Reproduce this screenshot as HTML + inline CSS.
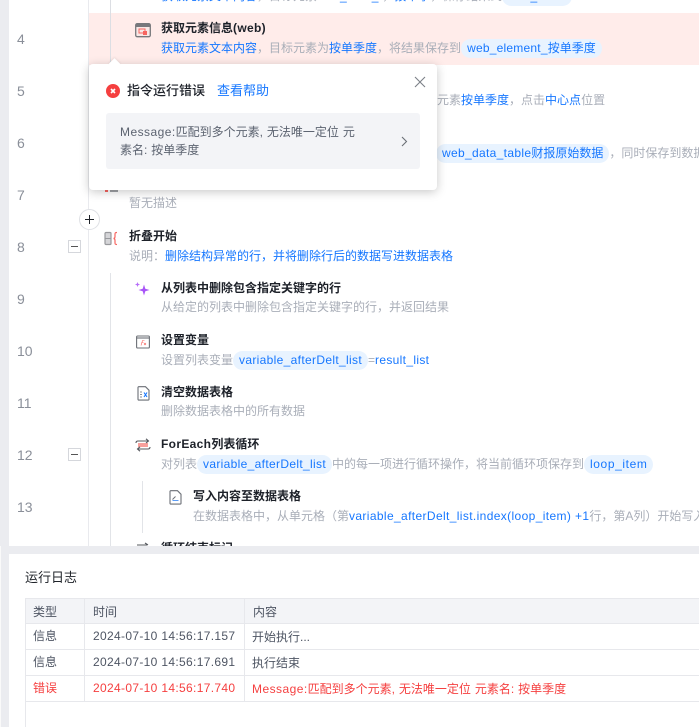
<!DOCTYPE html>
<html lang="zh">
<head>
<meta charset="utf-8">
<style>
html,body{margin:0;padding:0}
body{width:699px;height:727px;overflow:hidden;position:relative;background:#fff;font-family:"Liberation Sans","Noto Sans CJK SC",sans-serif;font-size:12px;color:#1f2329}
.a{position:absolute}
.t{position:absolute;white-space:nowrap;line-height:20px}
.n{position:absolute;left:17px;font-size:14px;color:#8a8f99;line-height:20px}
.ti{font-size:12px;font-weight:700;color:#1d2129}
.d{color:#a9aeb8}
.b{color:#1677ff}
.c{display:inline-block;background:#e8f3ff;color:#1677ff;border-radius:10px;padding:0 6px;line-height:19px;height:19px}
.l{letter-spacing:.33px}
.box{position:absolute;left:68px;width:11px;height:11px;border:1px solid #d5d7dc;background:#fff}
.box:after{content:"";position:absolute;left:2px;top:5px;width:7px;height:1px;background:#555}
.cell{position:absolute;white-space:nowrap;line-height:20px;color:#4e5563}
.r{color:#f53f3f}
</style>
</head>
<body>
<div class="a" style="left:0;top:0;width:9px;height:727px;background:#ebecf0"></div>
<div class="a" style="left:88px;top:0;width:1px;height:546px;background:#e9eaee"></div>
<div class="a" style="left:89px;top:13px;width:610px;height:52px;background:#ffecea"></div>
<div class="a" style="left:110px;top:0;width:1px;height:62px;background:#dcdee3"></div>
<div class="a" style="left:110px;top:273px;width:1px;height:273px;background:#e2e4e8"></div>
<div class="a" style="left:142px;top:481px;width:1px;height:52px;background:#e2e4e8"></div>

<div class="t" style="left:161px;top:-14px"><span class="b">获取元素文本内容</span><span class="d">，目标元素</span><span class="b l">web_data_t</span><span class="d">，</span><span class="b">按单季</span><span class="d">，保存结果到</span><span class="c" style="width:58px">web_</span></div>

<div class="n" style="top:29px">4</div>
<div class="n" style="top:81px">5</div>
<div class="n" style="top:133px">6</div>
<div class="n" style="top:185px">7</div>
<div class="n" style="top:237px">8</div>
<div class="n" style="top:289px">9</div>
<div class="n" style="top:341px">10</div>
<div class="n" style="top:393px">11</div>
<div class="n" style="top:445px">12</div>
<div class="n" style="top:497px">13</div>

<div class="box" style="top:240px"></div>
<div class="box" style="top:448px"></div>

<!-- row 4 -->
<svg class="a" style="left:135px;top:23px" width="16" height="15" viewBox="0 0 16 15"><rect x=".7" y=".7" width="14.6" height="13" rx="1.5" fill="#f8e8e6" stroke="#77787c" stroke-width="1.3"/><rect x="1" y="1" width="14" height="3" fill="#77787c"/><rect x="4" y="6" width="6" height="4" fill="none" stroke="#f76560"/><rect x="8" y="8" width="4" height="4" fill="#f76560"/></svg>
<div class="t ti" style="left:161px;top:18px">获取元素信息<span class="l">(web)</span></div>
<div class="t" style="left:161px;top:38px"><span class="b">获取元素文本内容</span><span class="d">，目标元素为</span><span class="b">按单季度</span><span class="d">，将结果保存到</span><span class="c"><span style="letter-spacing:.22px">web_element_</span>按单季度</span></div>

<!-- row 5 6 right side -->
<div class="t" style="left:437px;top:90px"><span class="d">元素</span><span class="b">按单季度</span><span class="d">，点击</span><span class="b">中心点</span><span class="d">位置</span></div>
<div class="t" style="left:436px;top:143px"><span class="c"><span class="l">web_data_table</span>财报原始数据</span><span class="d">，同时保存到数据</span></div>

<!-- row 7 -->
<div class="t d" style="left:129px;top:193px">暂无描述</div>
<div class="a" style="left:105px;top:188px;width:3px;height:4px;background:#f76560"></div>
<div class="a" style="left:110px;top:188px;width:8px;height:4px;background:#a0a1a5"></div>

<!-- plus -->
<div class="a" style="left:79px;top:209px;width:19px;height:19px;border:1px solid #dfe1e5;border-radius:50%;background:#fff"></div>
<svg class="a" style="left:84px;top:214px" width="11" height="11" viewBox="0 0 11 11"><path d="M5.5 1v9M1 5.500h9" stroke="#1f2329" stroke-width="1"/></svg>

<!-- row 8 -->
<svg class="a" style="left:104px;top:231px" width="14" height="15" viewBox="0 0 14 15"><rect x="1" y="1.500" width="6" height="12" rx="1" fill="#d5d5d8" stroke="#98999d" stroke-width="1.200"/><path d="M1 7.500h6" stroke="#98999d"/><path d="M13 1.500c-2 0-2 .5-2 2v2c0 1-.5 2-1.500 2 1 0 1.500 1 1.500 2v2c0 1.500 0 2 2 2" fill="none" stroke="#f76560" stroke-width="1.200"/></svg>
<div class="t ti" style="left:129px;top:226px">折叠开始</div>
<div class="t" style="left:129px;top:246px"><span class="d">说明：</span><span class="b">删除结构异常的行，并将删除行后的数据写进数据表格</span></div>

<!-- row 9 -->
<svg class="a" style="left:135px;top:282px" width="16" height="15" viewBox="0 0 16 15"><path d="M9 2.500l1.300 4.200 4.200 1.300-4.200 1.300L9 13.500 7.700 9.300 3.500 8l4.200-1.300z" fill="#a855f7"/><path d="M2.500 0l.7 1.800L5 2.500l-1.800.7-.7 1.800-.7-1.800L0 2.500l1.800-.7z" fill="#b76ef9"/></svg>
<div class="t ti" style="left:161px;top:278px">从列表中删除包含指定关键字的行</div>
<div class="t d" style="left:161px;top:297px">从给定的列表中删除包含指定关键字的行，并返回结果</div>

<!-- row 10 -->
<svg class="a" style="left:136px;top:335px" width="14" height="14" viewBox="0 0 14 14"><rect x=".6" y="1" width="12.800" height="12" rx="1" fill="#fff" stroke="#6b6f76" stroke-width="1.100"/><path d="M1 3h12" stroke="#6b6f76" stroke-width="1.100"/><path d="M5 10.500l1.500-5h2M5.500 7.500h2M8 8l2 2M10 8l-2 2" stroke="#f76560" stroke-width=".6" fill="none"/></svg>
<div class="t ti" style="left:161px;top:330px">设置变量</div>
<div class="t" style="left:161px;top:350px"><span class="d">设置列表变量</span><span class="c"><span class="l">variable_afterDelt_list</span></span><span class="d">=</span><span class="b l">result_list</span></div>

<!-- row 11 -->
<svg class="a" style="left:137px;top:386px" width="13" height="15" viewBox="0 0 13 15"><path d="M1 1.500c0-.4.300-.8.800-.8H8.500L12 4.200V13.300c0 .4-.3.800-.8.800H1.800c-.5 0-.8-.4-.8-.8z" fill="#fff" stroke="#6b6f76" stroke-width="1.100"/><path d="M3 6h2M3 8.500h2M3 11h2" stroke="#8a8f99"/><path d="M7 6.500l3 4.500M10 6.500l-3 4.500" stroke="#1677ff" stroke-width="1.100"/></svg>
<div class="t ti" style="left:161px;top:382px">清空数据表格</div>
<div class="t d" style="left:161px;top:401px">删除数据表格中的所有数据</div>

<!-- row 12 -->
<svg class="a" style="left:135px;top:438px" width="16" height="14" viewBox="0 0 16 14"><rect x="3" y="5" width="10" height="4" fill="#f8a09c"/><path d="M1 5c0-1.500 1-2 2-2h10M11 .8L13.500 3 11 5M15 9c0 1.500-1 2-2 2H3M5 8.800L2.500 11 5 13.200" fill="none" stroke="#55585e" stroke-width="1.100"/></svg>
<div class="t ti" style="left:161px;top:434px"><span class="l">ForEach</span>列表循环</div>
<div class="t" style="left:161px;top:454px"><span class="d">对列表</span><span class="c" style="margin-left:0"><span class="l">variable_afterDelt_list</span></span><span class="d">中的每一项进行循环操作，将当前循环项保存到</span><span class="c"><span style="letter-spacing:.6px">loop_item</span></span></div>

<!-- row 13 -->
<svg class="a" style="left:169px;top:490px" width="13" height="15" viewBox="0 0 13 15"><path d="M1 1.500c0-.4.300-.8.800-.8H8.500L12 4.200V13.300c0 .4-.3.800-.8.800H1.800c-.5 0-.8-.4-.8-.8z" fill="#fff" stroke="#6b6f76" stroke-width="1.100"/><path d="M3.500 10.500h6" stroke="#5b9cf5" stroke-width="1"/><path d="M3.500 9.500l3-3" stroke="#6b6f76" stroke-width="1"/></svg>
<div class="t ti" style="left:193px;top:486px">写入内容至数据表格</div>
<div class="t" style="left:193px;top:506px"><span class="d">在数据表格中，从单元格（第</span><span class="b" style="letter-spacing:.37px">variable_afterDelt_list.index(loop_item) +1</span><span class="d">行，第A列）开始写入</span></div>

<!-- row 14 clipped -->
<svg class="a" style="left:135px;top:540px" width="16" height="6" viewBox="0 0 16 6"><path d="M2 5h10M10 3l3 2" fill="none" stroke="#55585e" stroke-width="1.100"/></svg>
<div class="t ti" style="left:161px;top:538px">循环结束标记</div>

<!-- log panel -->
<div class="a" style="left:2px;top:546px;width:697px;height:8px;background:#ebecf0"></div>
<div class="a" style="left:9px;top:554px;width:690px;height:173px;background:#fff;border-radius:6px 0 0 0"></div>
<div class="a" style="left:0;top:546px;width:9px;height:181px;background:#ebecf0"></div>
<div class="a" style="left:0;top:546px;width:1px;height:181px;background:#fafafa"></div>
<div class="t" style="left:25px;top:568px;font-size:13px;color:#1f2329">运行日志</div>

<div class="a" style="left:25px;top:598px;width:674px;height:25px;background:#f3f4f7"></div>
<div class="a" style="left:25px;top:598px;width:674px;height:1px;background:#e7e8ec"></div>
<div class="a" style="left:25px;top:623px;width:674px;height:1px;background:#e7e8ec"></div>
<div class="a" style="left:25px;top:649px;width:674px;height:1px;background:#e7e8ec"></div>
<div class="a" style="left:25px;top:675px;width:674px;height:1px;background:#e7e8ec"></div>
<div class="a" style="left:25px;top:701px;width:674px;height:1px;background:#e7e8ec"></div>
<div class="a" style="left:25px;top:598px;width:1px;height:129px;background:#e7e8ec"></div>
<div class="a" style="left:84px;top:598px;width:1px;height:104px;background:#e7e8ec"></div>
<div class="a" style="left:244px;top:598px;width:1px;height:104px;background:#e7e8ec"></div>

<div class="cell" style="left:33px;top:602px">类型</div>
<div class="cell" style="left:93px;top:602px">时间</div>
<div class="cell" style="left:253px;top:602px">内容</div>
<div class="cell" style="left:33px;top:626px">信息</div>
<div class="cell l" style="left:93px;top:626px">2024-07-10 14:56:17.157</div>
<div class="cell" style="left:252px;top:627px">开始执行...</div>
<div class="cell" style="left:33px;top:652px">信息</div>
<div class="cell l" style="left:93px;top:652px">2024-07-10 14:56:17.691</div>
<div class="cell" style="left:252px;top:653px">执行结束</div>
<div class="cell r" style="left:33px;top:678px">错误</div>
<div class="cell r l" style="left:93px;top:678px">2024-07-10 14:56:17.740</div>
<div class="cell r" style="left:252px;top:679px;word-spacing:.6px"><span style="letter-spacing:.45px">Message:</span>匹配到多个元素, 无法唯一定位 元素名: 按单季度</div>

<!-- popover -->
<div class="a" style="left:89px;top:64px;width:348px;height:126px;background:#fff;border-radius:4px;box-shadow:0 2px 10px rgba(0,0,0,.22)"></div>
<div class="a" style="left:110px;top:60px;width:9px;height:9px;background:#fff;transform:rotate(45deg);box-shadow:-1px -1px 2px rgba(0,0,0,.06)"></div>
<div class="a" style="left:106px;top:84px;width:14px;height:14px;border-radius:50%;background:#f53f3f"></div>
<svg class="a" style="left:106px;top:84px" width="14" height="14" viewBox="0 0 14 14"><path d="M5 5l4 4M9 5l-4 4" stroke="#fff" stroke-width="1.600"/></svg>
<div class="t" style="left:127px;top:81px;font-size:13px;font-weight:500;color:#1d2129">指令运行错误</div>
<div class="t b" style="left:217px;top:81px;font-size:13px">查看帮助</div>
<svg class="a" style="left:414px;top:76px" width="12" height="12" viewBox="0 0 12 12"><path d="M1 1l10 10M11 1L1 11" stroke="#7c8087" stroke-width="1.100"/></svg>
<div class="a" style="left:106px;top:113px;width:314px;height:56px;background:#f3f4f7;border-radius:3px"></div>
<div class="a" style="left:120px;top:123px;white-space:nowrap;line-height:18px;color:#5c6370;word-spacing:.6px"><span style="letter-spacing:.45px">Message:</span>匹配到多个元素, 无法唯一定位 元<br>素名: 按单季度</div>
<svg class="a" style="left:401px;top:136px" width="7" height="11" viewBox="0 0 7 11"><path d="M1 1l4.500 4.500L1 10" fill="none" stroke="#6b6f76" stroke-width="1.100"/></svg>
</body>
</html>
